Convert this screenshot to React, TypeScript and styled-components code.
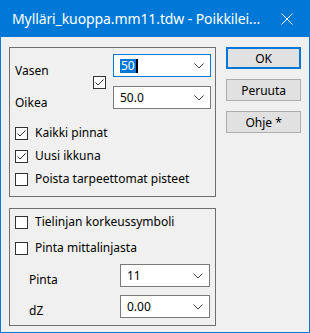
//react
import React from 'react';
import styled, { createGlobalStyle } from 'styled-components';

//styles
const GlobalStyle = createGlobalStyle`
  html, body {
    margin: 0;
    padding: 0;
    background: #f0f0f0;
  }
  * {
    box-sizing: border-box;
  }
`;

const Window = styled.div`
  width: 310px;
  height: 333px;
  display: flex;
  flex-direction: column;
  background: #f0f0f0;
  border: 1px solid #0078d7;
  border-top: none;
  font-family: 'Noto Sans', 'Open Sans', sans-serif;
  font-size: 12px;
  color: #000;
  overflow: hidden;
`;

const TitleBar = styled.div`
  height: 37px;
  flex: none;
  margin: 0 -1px;
  padding: 0 0 0 12px;
  display: flex;
  align-items: center;
  background: #0078d7;
  color: #fff;
  font-size: 14px;
`;

const TitleText = styled.span`
  flex: 1;
  white-space: nowrap;
  padding-bottom: 1px;
  letter-spacing: -0.1px;
`;

const CloseButton = styled.div`
  width: 46px;
  height: 37px;
  flex: none;
  display: flex;
  align-items: center;
  justify-content: center;
`;

const Body = styled.div`
  flex: 1;
  display: flex;
  gap: 10px;
  padding: 10px 8px 8px 8px;
`;

const LeftColumn = styled.div`
  width: 208px;
  display: flex;
  flex-direction: column;
  gap: 11px;
`;

const GroupBox = styled.div<{ $height: number }>`
  height: ${(p) => p.$height}px;
  border: 1px solid #6f6f6f;
  padding: 6px 4px 0 5px;
  display: flex;
  flex-direction: column;
`;

const SideGrid = styled.div`
  display: grid;
  grid-template-columns: 78px 20px 98px;
  grid-template-rows: 23px 23px;
  row-gap: 9px;
  margin-bottom: 17px;
`;

const SideLabel = styled.div<{ $row: number }>`
  grid-column: 1;
  grid-row: ${(p) => p.$row};
  padding-top: 8px;
  line-height: 17px;
`;

const MiddleCheck = styled.div`
  grid-column: 2;
  grid-row: 1 / span 2;
  align-self: center;
  padding-top: 1px;
`;

const SecondCombo = styled.div`
  grid-column: 3;
  grid-row: 2;
`;

const CheckList = styled.div<{ $gap: number }>`
  display: flex;
  flex-direction: column;
  gap: ${(p) => p.$gap}px;
`;

const CheckRow = styled.label`
  display: flex;
  align-items: center;
  gap: 7px;
  height: 14px;
  line-height: 14px;
  white-space: nowrap;
`;

const Box = styled.span`
  width: 13px;
  height: 13px;
  flex: none;
  border: 1px solid #333;
  background: #fff;
  display: flex;
  align-items: center;
  justify-content: center;
`;

const FieldGrid = styled.div`
  display: grid;
  grid-template-columns: 91px 90px;
  grid-template-rows: 23px 23px;
  row-gap: 8px;
  margin-top: 9px;
  padding-left: 14px;
`;

const FieldLabel = styled.div`
  padding-top: 7px;
  line-height: 17px;
`;

const Combo = styled.div<{ $focused?: boolean }>`
  height: 23px;
  display: flex;
  align-items: center;
  padding-left: 6px;
  background: #fff;
  border: 1px solid ${(p) => (p.$focused ? '#0078d7' : '#7a7a7a')};
`;

const ComboValue = styled.span`
  flex: 1;
  display: flex;
  align-items: center;
  line-height: 14px;
`;

const Selected = styled.span`
  background: #0078d7;
  color: #fff;
  padding: 0 1px;
`;

const Caret = styled.span`
  width: 2px;
  height: 14px;
  background: #000;
`;

const Chevron = styled.span`
  width: 22px;
  display: flex;
  justify-content: center;
`;

const ButtonColumn = styled.div`
  width: 75px;
  display: flex;
  flex-direction: column;
  gap: 10px;
`;

const Button = styled.div<{ $default?: boolean }>`
  height: 22px;
  display: flex;
  align-items: center;
  justify-content: center;
  background: #e1e1e1;
  border: ${(p) => (p.$default ? '2px solid #0078d7' : '1px solid #adadad')};
`;

//components
const CheckBox: React.FC<{ checked?: boolean }> = ({ checked }) => (
  <Box>
    {checked && (
      <svg width="11" height="11" viewBox="0 0 11 11">
        <polyline points="1.5,5.5 4,8 9.5,2.5" fill="none" stroke="#333" strokeWidth="1" />
      </svg>
    )}
  </Box>
);

const ComboBox: React.FC<{ value: string; focused?: boolean }> = ({ value, focused }) => (
  <Combo $focused={focused}>
    <ComboValue>
      {focused ? (
        <>
          <Selected>{value}</Selected>
          <Caret />
        </>
      ) : (
        value
      )}
    </ComboValue>
    <Chevron>
      <svg width="10" height="6" viewBox="0 0 10 6">
        <polyline points="0.5,0.5 5,5 9.5,0.5" fill="none" stroke="#444" strokeWidth="1" />
      </svg>
    </Chevron>
  </Combo>
);

//component definition
const App: React.FC = () => {
  return (
    <>
      <GlobalStyle />
      <Window>
        <TitleBar>
          <TitleText>Mylläri_kuoppa.mm11.tdw - Poikkilei...</TitleText>
          <CloseButton>
            <svg width="12" height="12" viewBox="0 0 12 12">
              <path d="M0.5 0.5 L11.5 11.5 M11.5 0.5 L0.5 11.5" stroke="#fff" strokeWidth="1" />
            </svg>
          </CloseButton>
        </TitleBar>
        <Body>
          <LeftColumn>
            <GroupBox $height={150}>
              <SideGrid>
                <SideLabel $row={1}>Vasen</SideLabel>
                <SideLabel $row={2}>Oikea</SideLabel>
                <MiddleCheck>
                  <CheckBox checked />
                </MiddleCheck>
                <ComboBox value="50" focused />
                <SecondCombo>
                  <ComboBox value="50.0" />
                </SecondCombo>
              </SideGrid>
              <CheckList $gap={9}>
                <CheckRow>
                  <CheckBox checked />
                  Kaikki pinnat
                </CheckRow>
                <CheckRow>
                  <CheckBox checked />
                  Uusi ikkuna
                </CheckRow>
                <CheckRow>
                  <CheckBox />
                  Poista tarpeettomat pisteet
                </CheckRow>
              </CheckList>
            </GroupBox>
            <GroupBox $height={118}>
              <CheckList $gap={12}>
                <CheckRow>
                  <CheckBox />
                  Tielinjan korkeussymboli
                </CheckRow>
                <CheckRow>
                  <CheckBox />
                  Pinta mittalinjasta
                </CheckRow>
              </CheckList>
              <FieldGrid>
                <FieldLabel>Pinta</FieldLabel>
                <ComboBox value="11" />
                <FieldLabel>dZ</FieldLabel>
                <ComboBox value="0.00" />
              </FieldGrid>
            </GroupBox>
          </LeftColumn>
          <ButtonColumn>
            <Button $default>OK</Button>
            <Button>Peruuta</Button>
            <Button>Ohje *</Button>
          </ButtonColumn>
        </Body>
      </Window>
    </>
  );
};

export default App;
